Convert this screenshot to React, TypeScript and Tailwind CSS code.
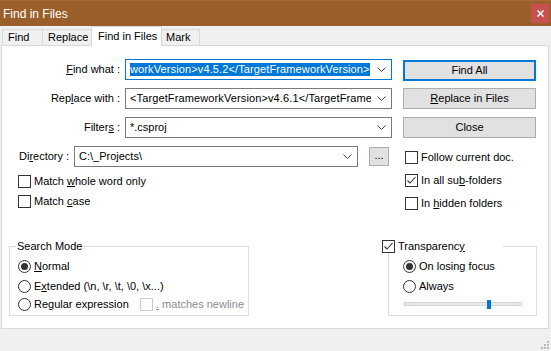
import React from 'react';

const Chevron = () => (
  <svg width="9" height="6" viewBox="0 0 9 6" className="shrink-0">
    <path d="M0.5 0.5 L4.5 4.5 L8.5 0.5" fill="none" stroke="#444444" strokeWidth="1" />
  </svg>
);

const Check = ({ checked = false, disabled = false }: { checked?: boolean; disabled?: boolean }) => (
  <span
    className={`w-[13px] h-[13px] border bg-white flex items-center justify-center shrink-0 ${
      disabled ? 'border-[#cccccc]' : 'border-[#333333]'
    }`}
  >
    {checked && (
      <svg width="11" height="11" viewBox="0 0 11 11">
        <path d="M1.5 5.5 L4 8 L9.5 2" fill="none" stroke="#333333" strokeWidth="1.1" />
      </svg>
    )}
  </span>
);

const Radio = ({ selected = false }: { selected?: boolean }) => (
  <span className="w-[13px] h-[13px] rounded-full border border-[#333333] bg-white flex items-center justify-center shrink-0">
    {selected && <span className="w-[7px] h-[7px] rounded-full bg-[#333333]" />}
  </span>
);

const U = ({ children }: { children: React.ReactNode }) => (
  <span className="underline underline-offset-[1px]">{children}</span>
);

export default function App() {
  return (
    <div className="w-[551px] h-[351px] bg-[#f0f0f0] flex flex-col overflow-hidden font-['Liberation_Sans',Arial,sans-serif] text-[11px] leading-[13px] text-black select-none">
      {/* Title bar */}
      <div className="h-[26px] bg-[#9a5f2b] border-t border-[#a56a36] flex items-center justify-between shrink-0">
        <span className="pl-[3px] text-white text-[12px] leading-[16px]">Find in Files</span>
        <div className="w-[18px] h-[19px] mr-[2px] bg-[#c75050] flex items-center justify-center">
          <svg width="7" height="7" viewBox="0 0 7 7">
            <path d="M0.5 0.5 L6.5 6.5 M6.5 0.5 L0.5 6.5" stroke="#ffffff" strokeWidth="1.5" />
          </svg>
        </div>
      </div>

      {/* Tabs */}
      <div className="h-[19px] flex items-end pl-[2px] shrink-0 relative z-10">
        <div className="w-[41px] h-[16px] bg-[#f0f0f0] border border-b-0 border-[#d9d9d9] flex items-center pl-[5px]">Find</div>
        <div className="w-[50px] h-[16px] -ml-px bg-[#f0f0f0] border border-b-0 border-[#d9d9d9] flex items-center pl-[5px]">Replace</div>
        <div className="w-[71px] h-[20px] -ml-px -mb-px bg-white border border-b-0 border-[#d9d9d9] flex items-start pt-[3px] pl-[6px]">
          Find in Files
        </div>
        <div className="w-[39px] h-[16px] -ml-px bg-[#f0f0f0] border border-b-0 border-[#d9d9d9] flex items-center pl-[4px]">Mark</div>
      </div>

      {/* Panel */}
      <div className="ml-[1px] w-[548px] h-[284px] bg-white border border-[#d9d9d9] flex flex-col shrink-0">
        <div className="flex items-start">
          {/* Left column */}
          <div className="w-[390px] flex flex-col">
            <div className="mt-[13px] h-[21px] flex items-center">
              <div className="w-[118px] text-right">
                <U>F</U>ind what :
              </div>
              <div className="ml-[5px] w-[267px] h-[21px] border border-[#0078d7] flex items-center pl-[4px] pr-[5px]">
                <div className="flex-1 overflow-hidden whitespace-nowrap tracking-[0.12px]">
                  <span className="bg-[#0078d7] text-white py-[1px]">workVersion&gt;v4.5.2&lt;/TargetFrameworkVersion&gt;</span>
                </div>
                <span className="ml-[6px]"><Chevron /></span>
              </div>
            </div>

            <div className="mt-[8px] h-[21px] flex items-center">
              <div className="w-[118px] text-right">
                Rep<U>l</U>ace with :
              </div>
              <div className="ml-[5px] w-[267px] h-[21px] border border-[#7a7a7a] flex items-center pl-[4px] pr-[5px]">
                <div className="flex-1 overflow-hidden whitespace-nowrap tracking-[0.12px]">&lt;TargetFrameworkVersion&gt;v4.6.1&lt;/TargetFrame</div>
                <span className="ml-[6px]"><Chevron /></span>
              </div>
            </div>

            <div className="mt-[8px] h-[21px] flex items-center">
              <div className="w-[118px] text-right">
                Filter<U>s</U> :
              </div>
              <div className="ml-[5px] w-[267px] h-[21px] border border-[#7a7a7a] flex items-center pl-[4px] pr-[5px]">
                <div className="flex-1 overflow-hidden whitespace-nowrap">*.csproj</div>
                <span className="ml-[6px]"><Chevron /></span>
              </div>
            </div>

            <div className="mt-[8px] h-[21px] flex items-center">
              <div className="ml-[17px] w-[55px]">
                Di<U>r</U>ectory :
              </div>
              <div className="w-[284px] h-[21px] border border-[#7a7a7a] flex items-center pl-[4px] pr-[5px]">
                <div className="flex-1 overflow-hidden whitespace-nowrap">C:\_Projects\</div>
                <span className="ml-[6px]"><Chevron /></span>
              </div>
              <div className="ml-[11px] w-[20px] h-[19px] bg-[#e1e1e1] border border-[#adadad] flex items-center justify-center pb-[2px]">
                ...
              </div>
            </div>

            <div className="mt-[8px] ml-[16px] flex items-center gap-[3px]">
              <Check />
              <span>Match <U>w</U>hole word only</span>
            </div>
            <div className="mt-[7px] ml-[16px] flex items-center gap-[3px]">
              <Check />
              <span>Match <U>c</U>ase</span>
            </div>
          </div>

          {/* Right column */}
          <div className="ml-[11px] w-[133px] flex flex-col">
            <div className="mt-[14px] h-[21px] bg-[#e1e1e1] border-2 border-[#0078d7] flex items-center justify-center">Find All</div>
            <div className="mt-[7px] h-[21px] bg-[#e1e1e1] border border-[#adadad] flex items-center justify-center">
              <span><U>R</U>eplace in Files</span>
            </div>
            <div className="mt-[8px] h-[21px] bg-[#e1e1e1] border border-[#adadad] flex items-center justify-center">Close</div>

            <div className="mt-[13px] pl-[2px] flex items-center gap-[3px]">
              <Check />
              <span>Follow current doc.</span>
            </div>
            <div className="mt-[10px] pl-[2px] flex items-center gap-[3px]">
              <Check checked />
              <span>In all su<U>b</U>-folders</span>
            </div>
            <div className="mt-[10px] pl-[2px] flex items-center gap-[3px]">
              <Check />
              <span>In <U>h</U>idden folders</span>
            </div>
          </div>
        </div>

        {/* Group boxes */}
        <div className="mt-[36px] flex items-start">
          <div className="ml-[7px] w-[240px] h-[70px] border border-[#dcdcdc] relative flex flex-col">
            <span className="absolute -top-[7px] left-[6px] bg-white px-[1px]">Search Mode</span>
            <div className="mt-[13px] pl-[8px] flex items-center gap-[3px]">
              <Radio selected />
              <span><U>N</U>ormal</span>
            </div>
            <div className="mt-[7px] pl-[8px] flex items-center gap-[3px]">
              <Radio />
              <span>E<U>x</U>tended (\n, \r, \t, \0, \x...)</span>
            </div>
            <div className="mt-[5px] pl-[8px] flex items-center gap-[3px]">
              <Radio />
              <span className="w-[103px]">Re<U>g</U>ular expression</span>
              <Check disabled />
              <span className="text-[#8c8c8c]"><U>.</U> matches newline</span>
            </div>
          </div>

          <div className="ml-[139px] w-[149px] h-[70px] border border-[#dcdcdc] relative flex flex-col">
            <div className="absolute -top-[7px] -left-[7px] w-[121px] bg-white flex items-center gap-[3px]">
              <Check checked />
              <span>Transparenc<U>y</U></span>
            </div>
            <div className="mt-[13px] pl-[14px] flex items-center gap-[3px]">
              <Radio selected />
              <span>On losing focus</span>
            </div>
            <div className="mt-[7px] pl-[14px] flex items-center gap-[3px]">
              <Radio />
              <span>Always</span>
            </div>
            <div className="mt-[9px] ml-[15px] w-[118px] h-[4px] bg-[#e7eaea] border border-[#d6d6d6] relative">
              <span className="absolute left-[82px] -top-[3px] w-[4px] h-[9px] bg-[#0078d7]" />
            </div>
          </div>
        </div>
      </div>

      {/* Status area with resize grip */}
      <div className="flex-1 flex justify-end items-end pr-[2px] pb-[2px]">
        <svg width="8" height="8" viewBox="0 0 8 8">
          <rect x="6" y="0" width="2" height="2" fill="#b8b8b8" />
          <rect x="3" y="3" width="2" height="2" fill="#b8b8b8" />
          <rect x="6" y="3" width="2" height="2" fill="#b8b8b8" />
          <rect x="0" y="6" width="2" height="2" fill="#b8b8b8" />
          <rect x="3" y="6" width="2" height="2" fill="#b8b8b8" />
          <rect x="6" y="6" width="2" height="2" fill="#b8b8b8" />
        </svg>
      </div>
    </div>
  );
}
